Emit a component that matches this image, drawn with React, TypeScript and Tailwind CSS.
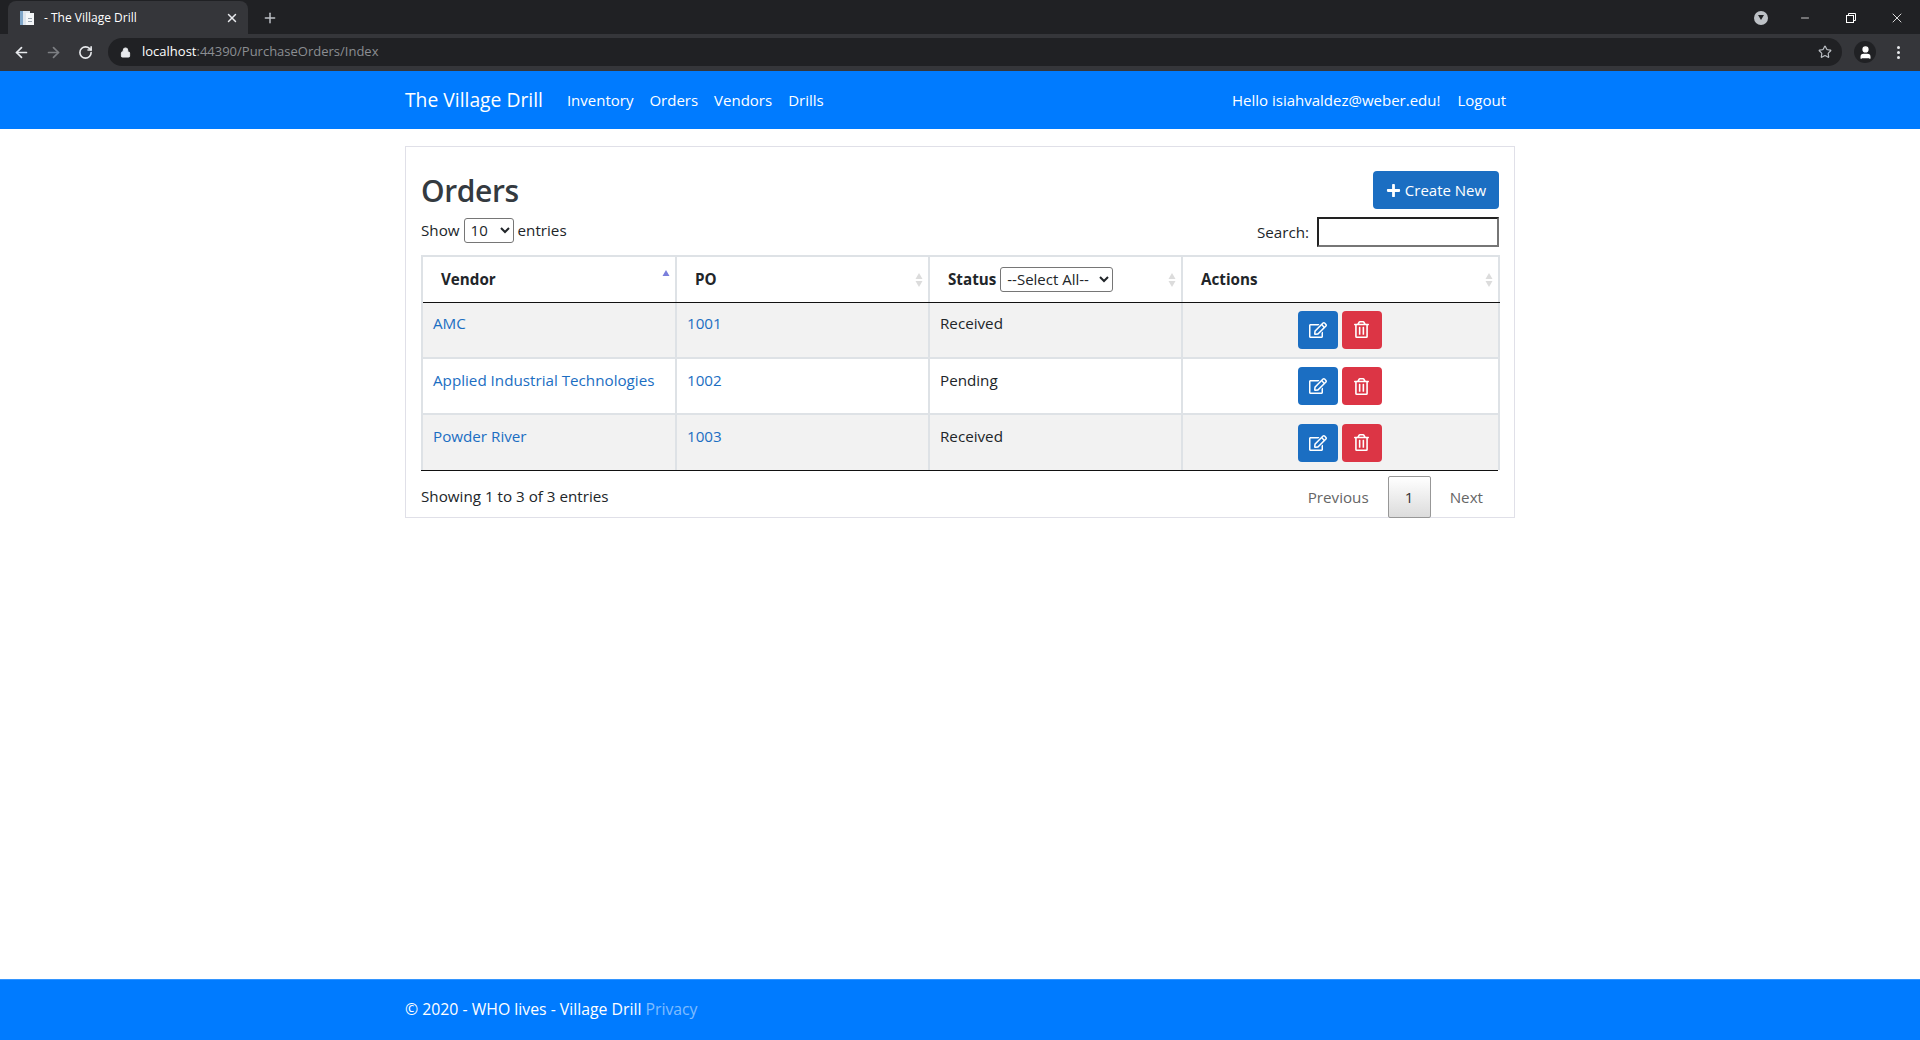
import { FaPlus, FaRegEdit, FaRegTrashAlt } from "react-icons/fa";
import { ArrowLeft, ArrowRight, RotateCw, Lock, Star, Plus, X, Minus, User } from "lucide-react";

const ROWS = [
  { vendor: "AMC", po: "1001", status: "Received" },
  { vendor: "Applied Industrial Technologies", po: "1002", status: "Pending" },
  { vendor: "Powder River", po: "1003", status: "Received" },
];

function SortArrows({ active }: { active?: boolean }) {
  return (
    <svg width="8" height="16" viewBox="0 0 8 16" className={`absolute right-[5px] ${active ? "top-[12px]" : "top-[15px]"}`}>
      <path d="M4 1 L7.5 7 L0.5 7 Z" fill={active ? "#7a7fdc" : "#dcdcdc"} />
      {!active && <path d="M4 15 L7.5 9 L0.5 9 Z" fill="#dcdcdc" />}
    </svg>
  );
}

function BrowserChrome() {
  return (
    <div className="shrink-0 bg-[#35363a]">
      <div className="flex h-[34px] items-end bg-[#202124] pl-2">
        <div className="flex h-[33px] w-[240px] items-center rounded-t-lg bg-[#35363a] pl-[11px] pr-[9px] text-[12px] text-white">
          <svg width="16" height="16" viewBox="0 0 16 16" className="mr-[9px] shrink-0">
            <rect x="1" y="1" width="10" height="14" fill="#dfe6ee" />
            <rect x="1" y="1" width="3" height="14" fill="#7fa6c9" />
            <rect x="7" y="3" width="8" height="12" fill="#f4f6f8" />
            <rect x="9" y="8" width="4" height="1" fill="#9aa5b1" />
            <rect x="9" y="11" width="4" height="1" fill="#9aa5b1" />
          </svg>
          <span className="flex-1 truncate">- The Village Drill</span>
          <X className="h-[14px] w-[14px] text-[#e8eaed]" strokeWidth={2.5} />
        </div>
        <div className="flex h-[33px] w-[44px] items-center justify-center">
          <Plus className="h-[16px] w-[16px] text-[#bdc1c6]" strokeWidth={2.2} />
        </div>
        <div className="flex-1" />
        <div className="flex h-[33px] items-center">
          <div className="mr-[14px] flex h-[14px] w-[14px] items-center justify-center rounded-full bg-[#bdc1c6]">
            <div className="h-0 w-0 border-x-[3px] border-t-[5px] border-x-transparent border-t-[#202124]" />
          </div>
          <div className="flex w-[46px] justify-center">
            <Minus className="h-[12px] w-[12px] text-white" strokeWidth={1.5} />
          </div>
          <div className="flex w-[46px] justify-center">
            <svg width="12" height="12" viewBox="0 0 12 12" fill="none" stroke="#fff">
              <rect x="1.5" y="3.5" width="7" height="7" />
              <path d="M3.5 3.5V1.5H10.5V8.5H8.5" />
            </svg>
          </div>
          <div className="flex w-[46px] justify-center">
            <X className="h-[16px] w-[16px] text-white" strokeWidth={1.25} />
          </div>
        </div>
      </div>
      <div className="flex h-[37px] items-center pb-[1px]">
        <ArrowLeft className="ml-[13px] h-[17px] w-[17px] text-[#e8eaed]" strokeWidth={2.4} />
        <ArrowRight className="ml-[15px] h-[17px] w-[17px] text-[#7d7f83]" strokeWidth={2.4} />
        <RotateCw className="ml-[16px] h-[15px] w-[15px] text-[#e8eaed]" strokeWidth={2.6} />
        <div className="ml-[15px] flex h-[28px] w-[1734px] items-center rounded-full bg-[#202124] pl-[12px] pr-[10px] text-[13px]">
          <Lock className="mr-[11px] h-[11px] w-[11px] fill-[#e8eaed] text-[#e8eaed]" strokeWidth={2} />
          <span className="text-white">localhost</span>
          <span className="text-[#8b8e92]">:44390/PurchaseOrders/Index</span>
          <div className="flex-1" />
          <Star className="h-[14px] w-[14px] text-[#bdc1c6]" strokeWidth={2} />
        </div>
        <div className="ml-[12px] flex h-[22px] w-[22px] items-center justify-center rounded-full bg-[#202124]">
          <User className="h-[15px] w-[15px] fill-white text-white" strokeWidth={2} />
        </div>
        <div className="ml-[21px] flex flex-col gap-[2px]">
          <div className="h-[3px] w-[3px] rounded-full bg-[#e8eaed]" />
          <div className="h-[3px] w-[3px] rounded-full bg-[#e8eaed]" />
          <div className="h-[3px] w-[3px] rounded-full bg-[#e8eaed]" />
        </div>
      </div>
    </div>
  );
}

const TH = "relative text-left font-bold pl-[18px] after:absolute after:bottom-[-1px] after:left-0 after:right-[-2px] after:h-px after:bg-[#111]";

export default function App() {
  return (
    <div className="flex h-[1040px] flex-col overflow-hidden bg-white font-['Open_Sans',sans-serif] text-[15.2px] text-[#212529]">
      <BrowserChrome />

      <nav className="h-[58px] shrink-0 bg-[#007bff] text-[15px] text-white">
        <div className="mx-auto flex h-full w-[1140px] items-center px-[15px]">
          <span className="mr-[24px] text-[19.3px]">The Village Drill</span>
          <a className="mr-[16px]">Inventory</a>
          <a className="mr-[16px]">Orders</a>
          <a className="mr-[16px]">Vendors</a>
          <a>Drills</a>
          <span className="ml-auto mr-[17px]">Hello isiahvaldez@weber.edu!</span>
          <a className="mr-[9px]">Logout</a>
        </div>
      </nav>

      <main className="flex-1">
        <div className="mx-auto w-[1140px] px-[15px] pt-[17px]">
          <div className="h-[372px] border border-[#e0e0e8] px-[15px]">
            <div className="flex h-[61px] items-end justify-between">
              <h1 className="mb-[-1px] text-[30px] font-semibold leading-[36px] tracking-[-0.4px] text-[#343a40]">Orders</h1>
              <button className="mb-[-1px] flex h-[38px] w-[126px] items-center justify-center gap-[4px] rounded-[4px] bg-[#1b6ec2] text-[15px] text-white">
                <FaPlus className="h-[15px] w-[15px]" />
                Create New
              </button>
            </div>
            <div className="mt-[9px] flex h-[38px] items-start justify-between">
              <label className="flex h-[26px] items-center gap-[4px]">
                Show
                <select className="h-[25px] w-[50px] rounded-[3px] border border-[#767676] bg-white px-[2px] text-[15px]">
                  <option>10</option>
                </select>
                entries
              </label>
              <label className="flex items-center gap-[8px]">
                Search:
                <input className="h-[30px] w-[182px] border-2 border-b-[#767676] border-l-[#222] border-r-[#767676] border-t-[#222] bg-white outline-none" />
              </label>
            </div>

            <div className="w-[1077px] border-b border-[#111]">
              <table className="w-full table-fixed border-collapse">
                <colgroup>
                  <col className="w-[254px]" />
                  <col className="w-[253px]" />
                  <col className="w-[253px]" />
                  <col className="w-[317px]" />
                </colgroup>
                <thead>
                  <tr className="h-[46px] border-x-2 border-t-2 border-b border-x-[#dee2e6] border-t-[#dee2e6] border-b-[#111]">
                    <th className={`${TH} border-r-2 border-[#dee2e6]`}>
                      Vendor
                      <SortArrows active />
                    </th>
                    <th className={`${TH} border-r-2 border-[#dee2e6]`}>
                      PO
                      <SortArrows />
                    </th>
                    <th className={`${TH} border-r-2 border-[#dee2e6]`}>
                      <span className="flex items-center gap-[4px]">
                        Status
                        <select className="h-[25px] w-[113px] rounded-[3px] border border-[#767676] bg-white pl-[2px] text-[15px] font-normal">
                          <option>--Select All--</option>
                        </select>
                      </span>
                      <SortArrows />
                    </th>
                    <th className={TH}>
                      Actions
                      <SortArrows />
                    </th>
                  </tr>
                </thead>
                <tbody>
                  {ROWS.map((row, i) => (
                    <tr
                      key={row.po}
                      className={`h-[56px] border-x-2 border-x-[#dee2e6] ${i === 2 ? "" : "border-b-2 border-b-[#dee2e6]"} ${i % 2 === 0 ? "bg-[#f2f2f2]" : "bg-white"}`}
                    >
                      <td className="border-r-2 border-[#dee2e6] px-[10px] pb-[12px] align-middle text-[#1b6ec2]">{row.vendor}</td>
                      <td className="border-r-2 border-[#dee2e6] px-[10px] pb-[12px] align-middle text-[#1b6ec2]">{row.po}</td>
                      <td className="border-r-2 border-[#dee2e6] px-[10px] pb-[12px] align-middle">{row.status}</td>
                      <td className="align-middle">
                        <div className="flex justify-center gap-[4px] pr-[2px]">
                          <button className="flex h-[38px] w-[40px] items-center justify-center rounded-[4px] bg-[#1b6ec2] pl-[1px] text-white">
                            <FaRegEdit className="h-[18px] w-[18px]" />
                          </button>
                          <button className="flex h-[38px] w-[40px] items-center justify-center rounded-[4px] bg-[#dc3545] text-white">
                            <FaRegTrashAlt className="h-[17px] w-[17px]" />
                          </button>
                        </div>
                      </td>
                    </tr>
                  ))}
                </tbody>
              </table>
            </div>

            <div className="flex items-start justify-between pt-[5px]">
              <span className="pt-[9px]">Showing 1 to 3 of 3 entries</span>
              <div className="flex items-center text-[#666]">
                <span className="mr-[19px]">Previous</span>
                <span className="flex h-[42px] w-[43px] items-center justify-center rounded-[2px] border border-[#979797] bg-gradient-to-b from-white to-[#dcdcdc] text-[#333]">1</span>
                <span className="ml-[19px] mr-[16px]">Next</span>
              </div>
            </div>
          </div>
        </div>
      </main>

      <footer className="h-[61px] shrink-0 border-t border-[#3395ff] bg-[#007bff] text-[15.8px] text-white">
        <div className="mx-auto flex h-full w-[1140px] items-center px-[15px]">
          <span>© 2020 - WHO lives - Village Drill</span>
          <a className="ml-[4px] text-white/50">Privacy</a>
        </div>
      </footer>
    </div>
  );
}
